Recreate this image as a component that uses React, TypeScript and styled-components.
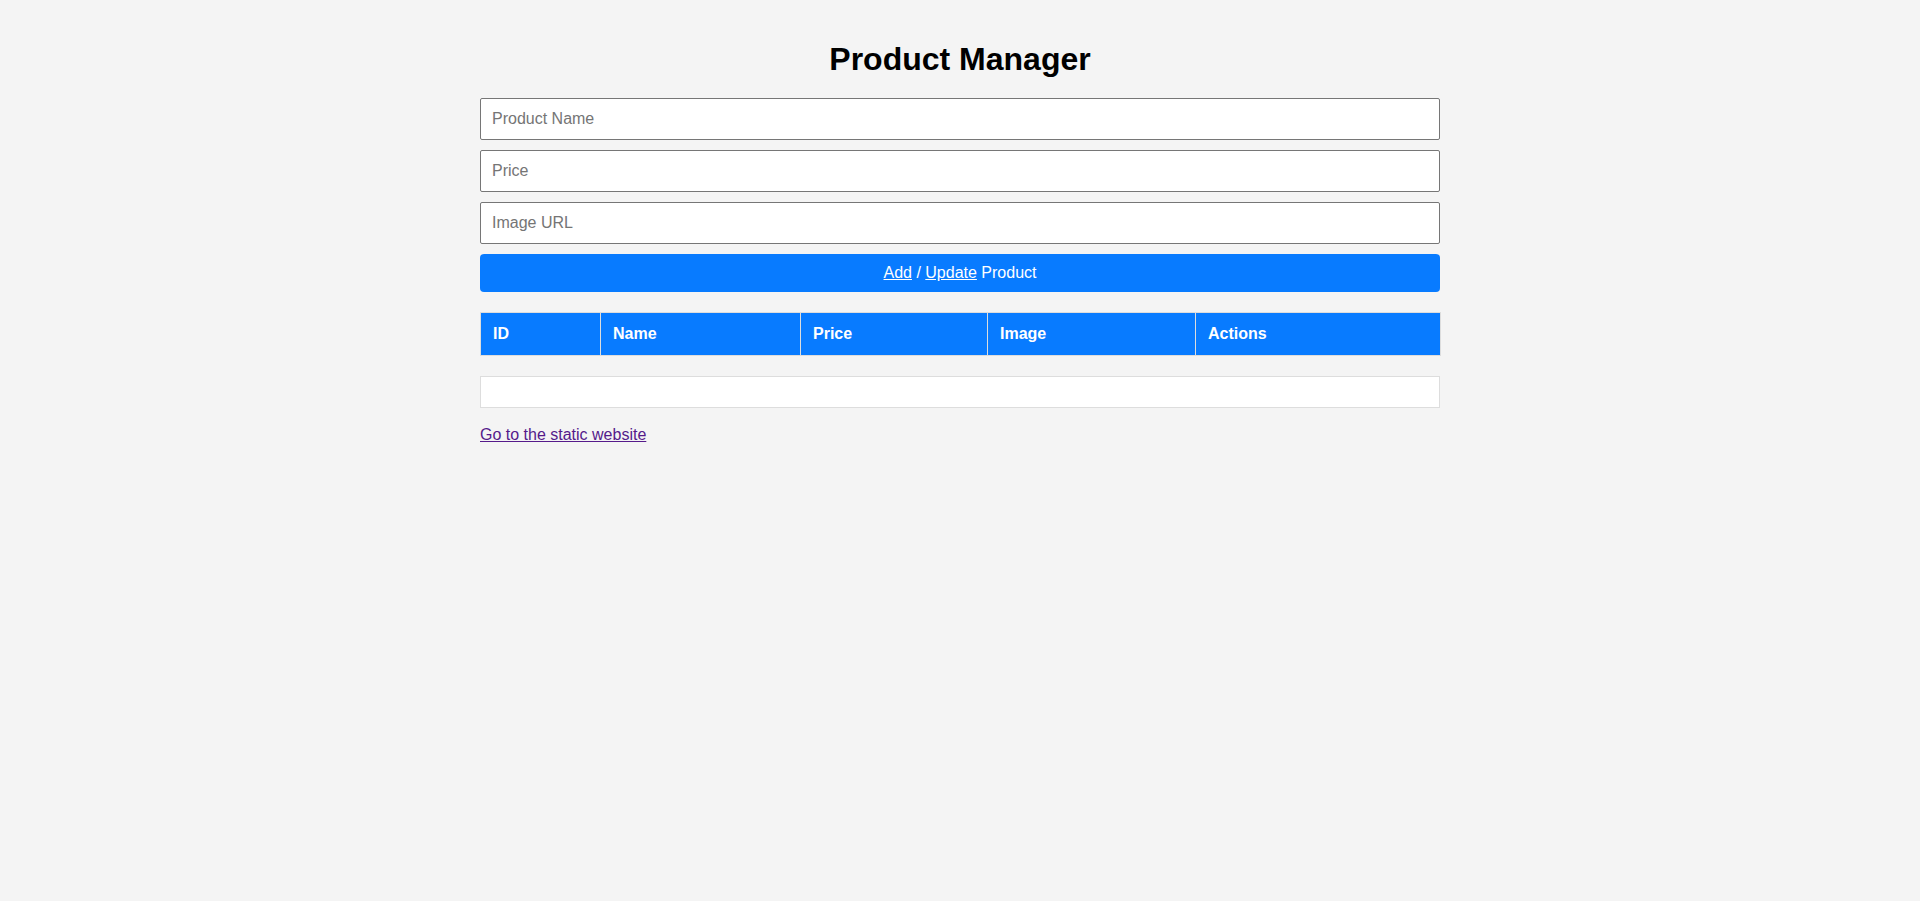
import React from "react";
import styled, { createGlobalStyle } from "styled-components";

const Global = createGlobalStyle`
  html, body { margin: 0; padding: 0; background: #f4f4f4; }
  body { font-family: "Liberation Sans", Arial, sans-serif; color: #000; }
  * { box-sizing: border-box; }
`;

const Page = styled.main`
  width: 960px;
  margin: 0 auto;
  padding: 20px 0 20px;
  display: flex;
  flex-direction: column;
`;

const Title = styled.h1`
  font-size: 32px;
  font-weight: bold;
  text-align: center;
  margin: 21px 0 20px;
  line-height: 37px;
`;

const Form = styled.form`
  display: flex;
  flex-direction: column;
  gap: 10px;
`;

const Input = styled.input`
  width: 100%;
  height: 42px;
  padding: 10px 11px;
  font-size: 16px;
  font-family: "Liberation Sans", Arial, sans-serif;
  border: 1px solid #767676;
  border-radius: 2px;
  background: #fff;
  &::placeholder { color: #757575; }
`;

const Button = styled.button`
  width: 100%;
  height: 38px;
  border: none;
  border-radius: 4px;
  background: #087bff;
  color: #fff;
  font-size: 16px;
  font-family: "Liberation Sans", Arial, sans-serif;
  cursor: pointer;
  u { text-decoration: underline; }
`;

const Table = styled.table`
  width: 100%;
  border-collapse: collapse;
  table-layout: fixed;
  margin-top: 20px;
`;

const Th = styled.th<{ $w: number }>`
  width: ${(p) => p.$w}px;
  background: #087bff;
  color: #fff;
  text-align: left;
  font-size: 16px;
  font-weight: bold;
  padding: 12px;
  height: 43px;
  border: 1px solid #ddd;
`;

const Empty = styled.div`
  margin-top: 20px;
  height: 32px;
  background: #fff;
  border: 1px solid #ddd;
`;

const Link = styled.a`
  margin-top: 18px;
  font-size: 16px;
  color: #551a8b;
  text-decoration: underline;
  align-self: flex-start;
`;

const cols: [string, number][] = [
  ["ID", 120],
  ["Name", 200],
  ["Price", 187],
  ["Image", 208],
  ["Actions", 245],
];

export default function App() {
  return (
    <>
      <Global />
      <Page>
        <Title>Product Manager</Title>
        <Form onSubmit={(e) => e.preventDefault()}>
          <Input placeholder="Product Name" />
          <Input placeholder="Price" />
          <Input placeholder="Image URL" />
          <Button type="submit">
            <u>Add</u> / <u>Update</u> Product
          </Button>
        </Form>
        <Table>
          <thead>
            <tr>
              {cols.map(([c, w]) => (
                <Th key={c} $w={w}>
                  {c}
                </Th>
              ))}
            </tr>
          </thead>
          <tbody />
        </Table>
        <Empty />
        <Link href="#">Go to the static website</Link>
      </Page>
    </>
  );
}
